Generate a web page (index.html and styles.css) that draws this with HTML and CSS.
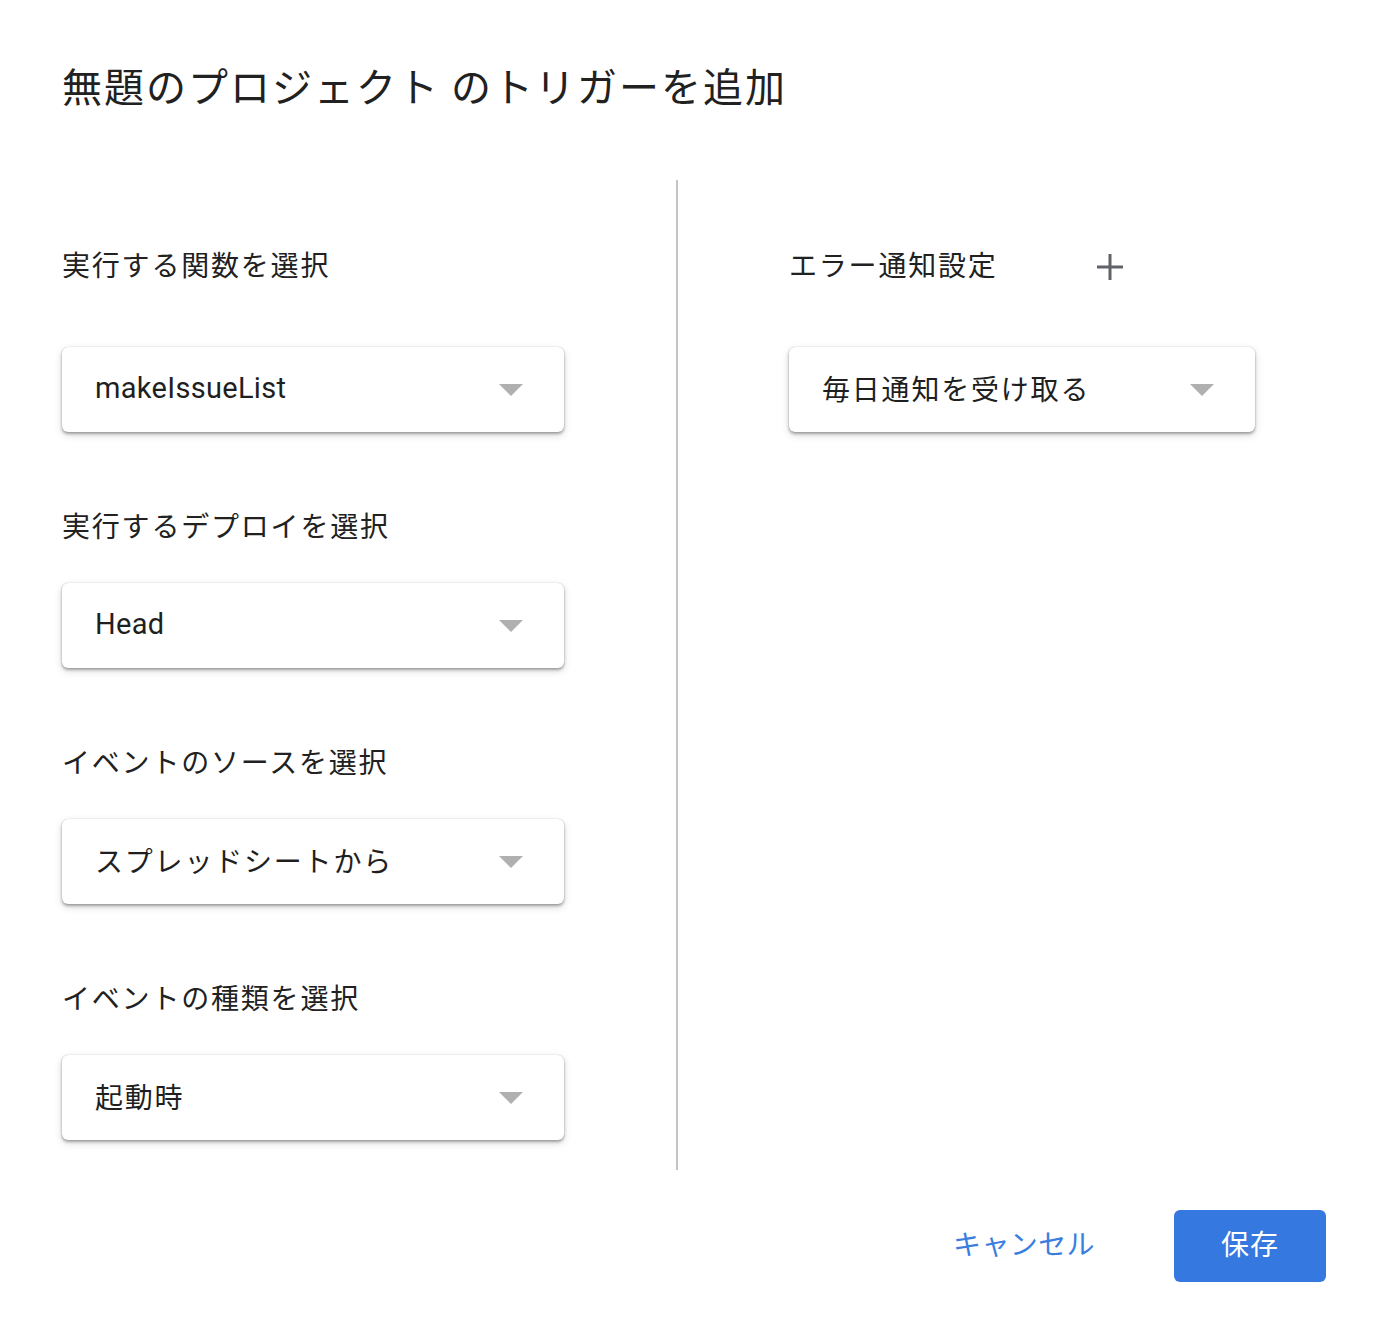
FILE: index.html
```html
<!DOCTYPE html>
<html lang="ja">
<head>
<meta charset="utf-8">
<title>トリガーを追加</title>
<link rel="stylesheet" href="styles.css">
</head>
<body>
<div class="dialog">
  <h1 class="title">無題のプロジェクト のトリガーを追加</h1>
  <div class="body">
    <div class="col left">
      <div class="label">実行する関数を選択</div>
      <div class="select first"><span class="value latin">makeIssueList</span><span class="arrow"></span></div>
      <div class="label">実行するデプロイを選択</div>
      <div class="select"><span class="value latin">Head</span><span class="arrow"></span></div>
      <div class="label">イベントのソースを選択</div>
      <div class="select"><span class="value">スプレッドシートから</span><span class="arrow"></span></div>
      <div class="label">イベントの種類を選択</div>
      <div class="select"><span class="value">起動時</span><span class="arrow"></span></div>
    </div>
    <div class="divider"></div>
    <div class="col right">
      <div class="label-row">
        <div class="label">エラー通知設定</div>
        <svg class="plus" width="30" height="30" viewBox="0 0 30 30"><path d="M15 2v26M2 15h26" stroke="#5f6368" stroke-width="3" fill="none"/></svg>
      </div>
      <div class="select first narrow"><span class="value">毎日通知を受け取る</span><span class="arrow"></span></div>
    </div>
  </div>
  <div class="footer">
    <button class="btn cancel">キャンセル</button>
    <button class="btn save">保存</button>
  </div>
</div>
</body>
</html>
```

FILE: styles.css
```css
html, body {
  margin: 0;
  padding: 0;
  background: #fff;
}
body {
  font-family: "Noto Sans CJK JP", sans-serif;
  color: #212121;
}
.dialog {
  padding: 0 58px 0 62px;
}
.title {
  margin: 0;
  padding-top: 59px;
  font-size: 40px;
  line-height: 52px;
  font-weight: 400;
  letter-spacing: 2px;
  height: 52px;
  white-space: nowrap;
}
.body {
  display: flex;
  margin-top: 69px;
  height: 990px;
}
.col {
  display: flex;
  flex-direction: column;
  padding-top: 64px;
}
.left {
  width: 614px;
}
.divider {
  width: 2px;
  background: #c4c4c8;
}
.right {
  padding-left: 111px;
}
.label {
  font-size: 28px;
  line-height: 40px;
  height: 40px;
  letter-spacing: 1.8px;
  color: #212121;
  flex-shrink: 0;
}
.label-row {
  display: flex;
  align-items: center;
  flex-shrink: 0;
}
.plus {
  margin-left: 97px;
  margin-top: 5px;
}
.select {
  box-sizing: border-box;
  flex-shrink: 0;
  width: 502px;
  height: 85px;
  border-radius: 6px;
  background: #fff;
  box-shadow: 0 0 1px rgba(0,0,0,.28), 0 2px 3px rgba(0,0,0,.3), 0 3px 8px rgba(0,0,0,.14);
  display: flex;
  align-items: center;
  justify-content: space-between;
  padding: 0 41px 4px 33px;
  margin-top: 38px;
  margin-bottom: 73px;
}
.select.first {
  margin-top: 63px;
}
.narrow {
  width: 466px;
  padding-right: 41px;
}
.value {
  font-size: 28px;
  letter-spacing: 1.8px;
  color: #1f1f1f;
}
.latin {
  font-family: Roboto, "Noto Sans CJK JP", sans-serif;
  font-size: 29px;
  letter-spacing: 0.3px;
}
.arrow {
  width: 0;
  height: 0;
  margin-top: 4px;
  border-left: 12px solid transparent;
  border-right: 12px solid transparent;
  border-top: 12px solid #b0b0b0;
}
.footer {
  display: flex;
  justify-content: flex-end;
  align-items: center;
  margin-top: 40px;
}
.btn {
  font-family: "Noto Sans CJK JP", sans-serif;
  font-size: 28px;
  line-height: 36px;
  border: none;
  cursor: pointer;
}
.cancel {
  background: transparent;
  color: #3a7ee0;
  padding: 0 0 6px 0;
  letter-spacing: 0.4px;
  margin-right: 79px;
}
.save {
  width: 152px;
  height: 72px;
  border-radius: 6px;
  background: #3478e0;
  color: #fff;
  letter-spacing: 1px;
  padding: 0 0 6px 0;
}
```
